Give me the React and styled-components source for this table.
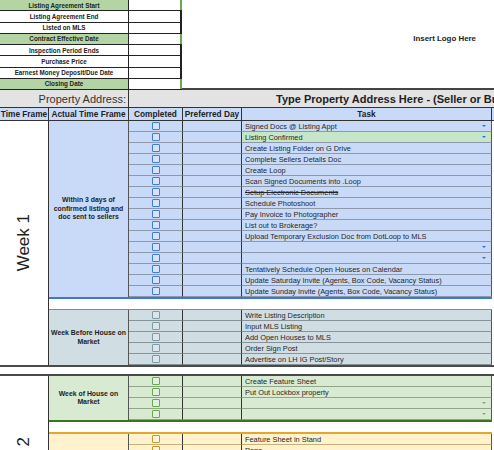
import React from 'react'
import styled, { createGlobalStyle } from 'styled-components'

const GlobalStyle = createGlobalStyle`
  body {
    margin: 0;
    background: #fff;
    font-family: 'Liberation Sans', Arial, sans-serif;
    color: #222;
  }
  * { box-sizing: border-box; }
`

const themes = {
  blue: { bg: '#c9daf8', line: '#8d99ab', box: '#3d7be0', arrow: '#2f6fe0' },
  slate: { bg: '#d0dde3', line: '#86949a', box: '#7d9aa6', arrow: '#7d9aa6' },
  green: { bg: '#d9ead3', line: '#93a58b', box: '#6aa84f', arrow: '#8aa37e' },
  yellow: { bg: '#fff2cc', line: '#c9b27a', box: '#c8962a', arrow: '#c8962a' },
}

const Sheet = styled.div`
  width: 494px;
  height: 450px;
  overflow: hidden;
`
const Top = styled.div`
  display: flex;
  height: 90px;
`
const DateTable = styled.div`
  display: grid;
  grid-template-rows: repeat(8, 1fr);
  width: 182px;
`
const DateRow = styled.div`
  display: grid;
  grid-template-columns: 129px 53px;
  border-bottom: 1px solid #222;
`
const DateLabel = styled.div`
  display: flex;
  align-items: center;
  justify-content: center;
  background: ${(p) => (p.$green ? '#b4d5a3' : '#fff')};
  border-right: 1px solid #222;
  font-size: 6.3px;
  font-weight: 700;
`
const DateValue = styled.div`
  border-right: 2px solid ${(p) => (p.$green ? '#6aa84f' : '#222')};
`
const LogoArea = styled.div`
  flex: 1;
  display: flex;
  justify-content: flex-end;
  padding: 34px 18px 0 0;
  border-bottom: 2px solid #444;
  font-size: 7.9px;
  font-weight: 700;
`
const PropertyRow = styled.div`
  display: grid;
  grid-template-columns: 129px 1fr;
  height: 18px;
  background: #e3e3e3;
  border-bottom: 1px solid #333;
`
const PropertyLabel = styled.div`
  display: flex;
  align-items: center;
  justify-content: flex-end;
  padding-right: 2px;
  border-right: 1px solid #333;
  font-size: 11px;
  color: #333;
`
const PropertyValue = styled.div`
  display: flex;
  align-items: center;
  padding-left: 147px;
  white-space: nowrap;
  overflow: hidden;
  font-size: 11px;
  font-weight: 700;
`
const HeaderRow = styled.div`
  display: grid;
  grid-template-columns: 49px 80px 54px 59px 250px;
  height: 13px;
  background: #c9daf8;
  border-bottom: 1px solid #333;
`
const HeaderCell = styled.div`
  display: flex;
  align-items: center;
  justify-content: center;
  border-right: 1px solid #333;
  font-size: 8.3px;
  font-weight: 700;
  white-space: nowrap;
`
const Week = styled.div`
  display: flex;
`
const TimeFrame = styled.div`
  width: 49px;
  flex: none;
  display: flex;
  align-items: center;
  justify-content: center;
  border-right: 1px solid #333;
`
const WeekLabel = styled.span`
  writing-mode: vertical-rl;
  transform: rotate(180deg);
  white-space: nowrap;
  font-size: 17px;
  color: #222;
`
const Sections = styled.div`
  width: 443px;
  display: flex;
  flex-direction: column;
`
const Section = styled.div`
  display: grid;
  grid-template-columns: 80px 54px 59px 250px;
  grid-auto-rows: 11px;
  background: ${(p) => themes[p.$theme].bg};
  border-top: ${(p) => p.$top || 'none'};
  border-bottom: ${(p) => p.$bottom || 'none'};
`
const Actual = styled.div`
  grid-column: 1;
  grid-row: 1 / span ${(p) => p.$rows};
  display: flex;
  align-items: center;
  justify-content: center;
  text-align: center;
  border-right: 1px solid #555;
  font-size: 6.9px;
  line-height: 8.5px;
  font-weight: 700;
  white-space: nowrap;
`
const Cell = styled.div`
  display: flex;
  align-items: center;
  justify-content: ${(p) => (p.$center ? 'center' : 'flex-start')};
  border-right: 1px solid #333;
  border-bottom: 1px solid ${(p) => themes[p.$theme].line};
`
const TaskCell = styled.div`
  display: flex;
  align-items: center;
  gap: 4px;
  padding: 0 5px 0 3px;
  background: ${(p) => (p.$hl ? '#c6e6c9' : 'transparent')};
  border-right: 1px solid #555;
  border-bottom: 1px solid ${(p) => themes[p.$theme].line};
  font-size: 7.4px;
  color: #262626;
  white-space: nowrap;
`
const TaskText = styled.span`
  flex: 1;
  text-decoration: ${(p) => (p.$strike ? 'line-through' : 'none')};
`
const Box = styled.span`
  width: 8px;
  height: 8px;
  border: 1px solid ${(p) => themes[p.$theme].box};
  border-radius: 1px;
  background: rgba(255, 255, 255, 0.25);
`
const Arrow = styled.span`
  width: 0;
  height: 0;
  border-left: 2px solid transparent;
  border-right: 2px solid transparent;
  border-top: 2.5px solid ${(p) => themes[p.$theme].arrow};
`
const InnerGap = styled.div`
  height: 10px;
  background: #fff;
`
const WeekGap = styled.div`
  height: 11px;
  width: 494px;
  border-top: 2px solid #4a4a4a;
  border-bottom: 2px solid #4a4a4a;
`

const dates = [
  ['Listing Agreement Start', true],
  ['Listing Agreement End'],
  ['Listed on MLS'],
  ['Contract Effective Date', true],
  ['Inspection Period Ends'],
  ['Purchase Price'],
  ['Earnest Money Deposit/Due Date'],
  ['Closing Date', true],
]

const weeks = [
  {
    label: 'Week 1',
    sections: [
      {
        theme: 'blue',
        actual: ['Within 3 days of', 'confirmed listing and', 'doc sent to sellers'],
        bottom: '2px solid #3c78d8',
        tasks: [
          { t: 'Signed Docs @ Listing Appt', dd: true },
          { t: 'Listing Confirmed', dd: true, hl: true },
          { t: 'Create Listing Folder on G Drive' },
          { t: 'Complete Sellers Details Doc' },
          { t: 'Create Loop' },
          { t: 'Scan Signed Documents into .Loop' },
          { t: 'Setup Electronic Documents', strike: true },
          { t: 'Schedule Photoshoot' },
          { t: 'Pay Invoice to Photographer' },
          { t: 'List out to Brokerage?' },
          { t: 'Upload Temporary Exclusion Doc from DotLoop to MLS' },
          { t: '', dd: true },
          { t: '', dd: true },
          { t: 'Tentatively Schedule Open Houses on Calendar' },
          { t: 'Update Saturday Invite (Agents, Box Code, Vacancy Status)' },
          { t: 'Update Sunday Invite (Agents, Box Code, Vacancy Status)' },
        ],
      },
      {
        theme: 'slate',
        actual: ['Week Before House on', 'Market'],
        top: '1px solid #7d8b92',
        tasks: [
          { t: 'Write Listing Description' },
          { t: 'Input MLS Listing' },
          { t: 'Add Open Houses to MLS' },
          { t: 'Order Sign Post' },
          { t: 'Advertise on LH IG Post/Story' },
        ],
      },
    ],
  },
  {
    label: 'Week 2',
    sections: [
      {
        theme: 'green',
        actual: ['Week of House on', 'Market'],
        bottom: '2px solid #38761d',
        tasks: [
          { t: 'Create Feature Sheet' },
          { t: 'Put Out Lockbox property' },
          { t: '', dd: true },
          { t: '', dd: true },
        ],
      },
      {
        theme: 'yellow',
        actual: ['Open House', 'Weekend'],
        top: '2px solid #e3a82b',
        tasks: [
          { t: 'Feature Sheet in Stand' },
          { t: 'Pens' },
          { t: 'Sign In Sheets' },
          { t: 'Open House Signs' },
          { t: 'Water / Snacks' },
          { t: 'Lights On' },
          { t: 'Blinds Open' },
          { t: 'Thermostat Set' },
          { t: 'Lock Up' },
          { t: 'Follow Up With Visitors' },
          { t: 'Update Sellers' },
        ],
      },
    ],
  },
]

function TaskSection({ section }) {
  const { theme, actual, tasks, top, bottom } = section
  return (
    <Section $theme={theme} $top={top} $bottom={bottom}>
      <Actual $rows={tasks.length}>
        <div>
          {actual.map((line) => (
            <div key={line}>{line}</div>
          ))}
        </div>
      </Actual>
      {tasks.map((task, i) => (
        <React.Fragment key={i}>
          <Cell $theme={theme} $center>
            <Box $theme={theme} />
          </Cell>
          <Cell $theme={theme} />
          <TaskCell $theme={theme} $hl={task.hl}>
            <TaskText $strike={task.strike}>{task.t}</TaskText>
            {task.dd && <Arrow $theme={theme} />}
          </TaskCell>
        </React.Fragment>
      ))}
    </Section>
  )
}

export default function App() {
  return (
    <>
      <GlobalStyle />
      <Sheet>
        <Top>
          <DateTable>
            {dates.map(([label, green]) => (
              <DateRow key={label}>
                <DateLabel $green={green}>{label}</DateLabel>
                <DateValue $green={green} />
              </DateRow>
            ))}
          </DateTable>
          <LogoArea>Insert Logo Here</LogoArea>
        </Top>
        <PropertyRow>
          <PropertyLabel>Property Address:</PropertyLabel>
          <PropertyValue>Type Property Address Here - (Seller or Buyer Name)</PropertyValue>
        </PropertyRow>
        <HeaderRow>
          <HeaderCell>Time Frame</HeaderCell>
          <HeaderCell>Actual Time Frame</HeaderCell>
          <HeaderCell>Completed</HeaderCell>
          <HeaderCell>Preferred Day</HeaderCell>
          <HeaderCell>Task</HeaderCell>
        </HeaderRow>
        {weeks.map((week, w) => (
          <React.Fragment key={week.label}>
            {w > 0 && <WeekGap />}
            <Week>
              <TimeFrame>
                <WeekLabel>{week.label}</WeekLabel>
              </TimeFrame>
              <Sections>
                {week.sections.map((s, i) => (
                  <React.Fragment key={i}>
                    {i > 0 && <InnerGap />}
                    <TaskSection section={s} />
                  </React.Fragment>
                ))}
              </Sections>
            </Week>
          </React.Fragment>
        ))}
      </Sheet>
    </>
  )
}
